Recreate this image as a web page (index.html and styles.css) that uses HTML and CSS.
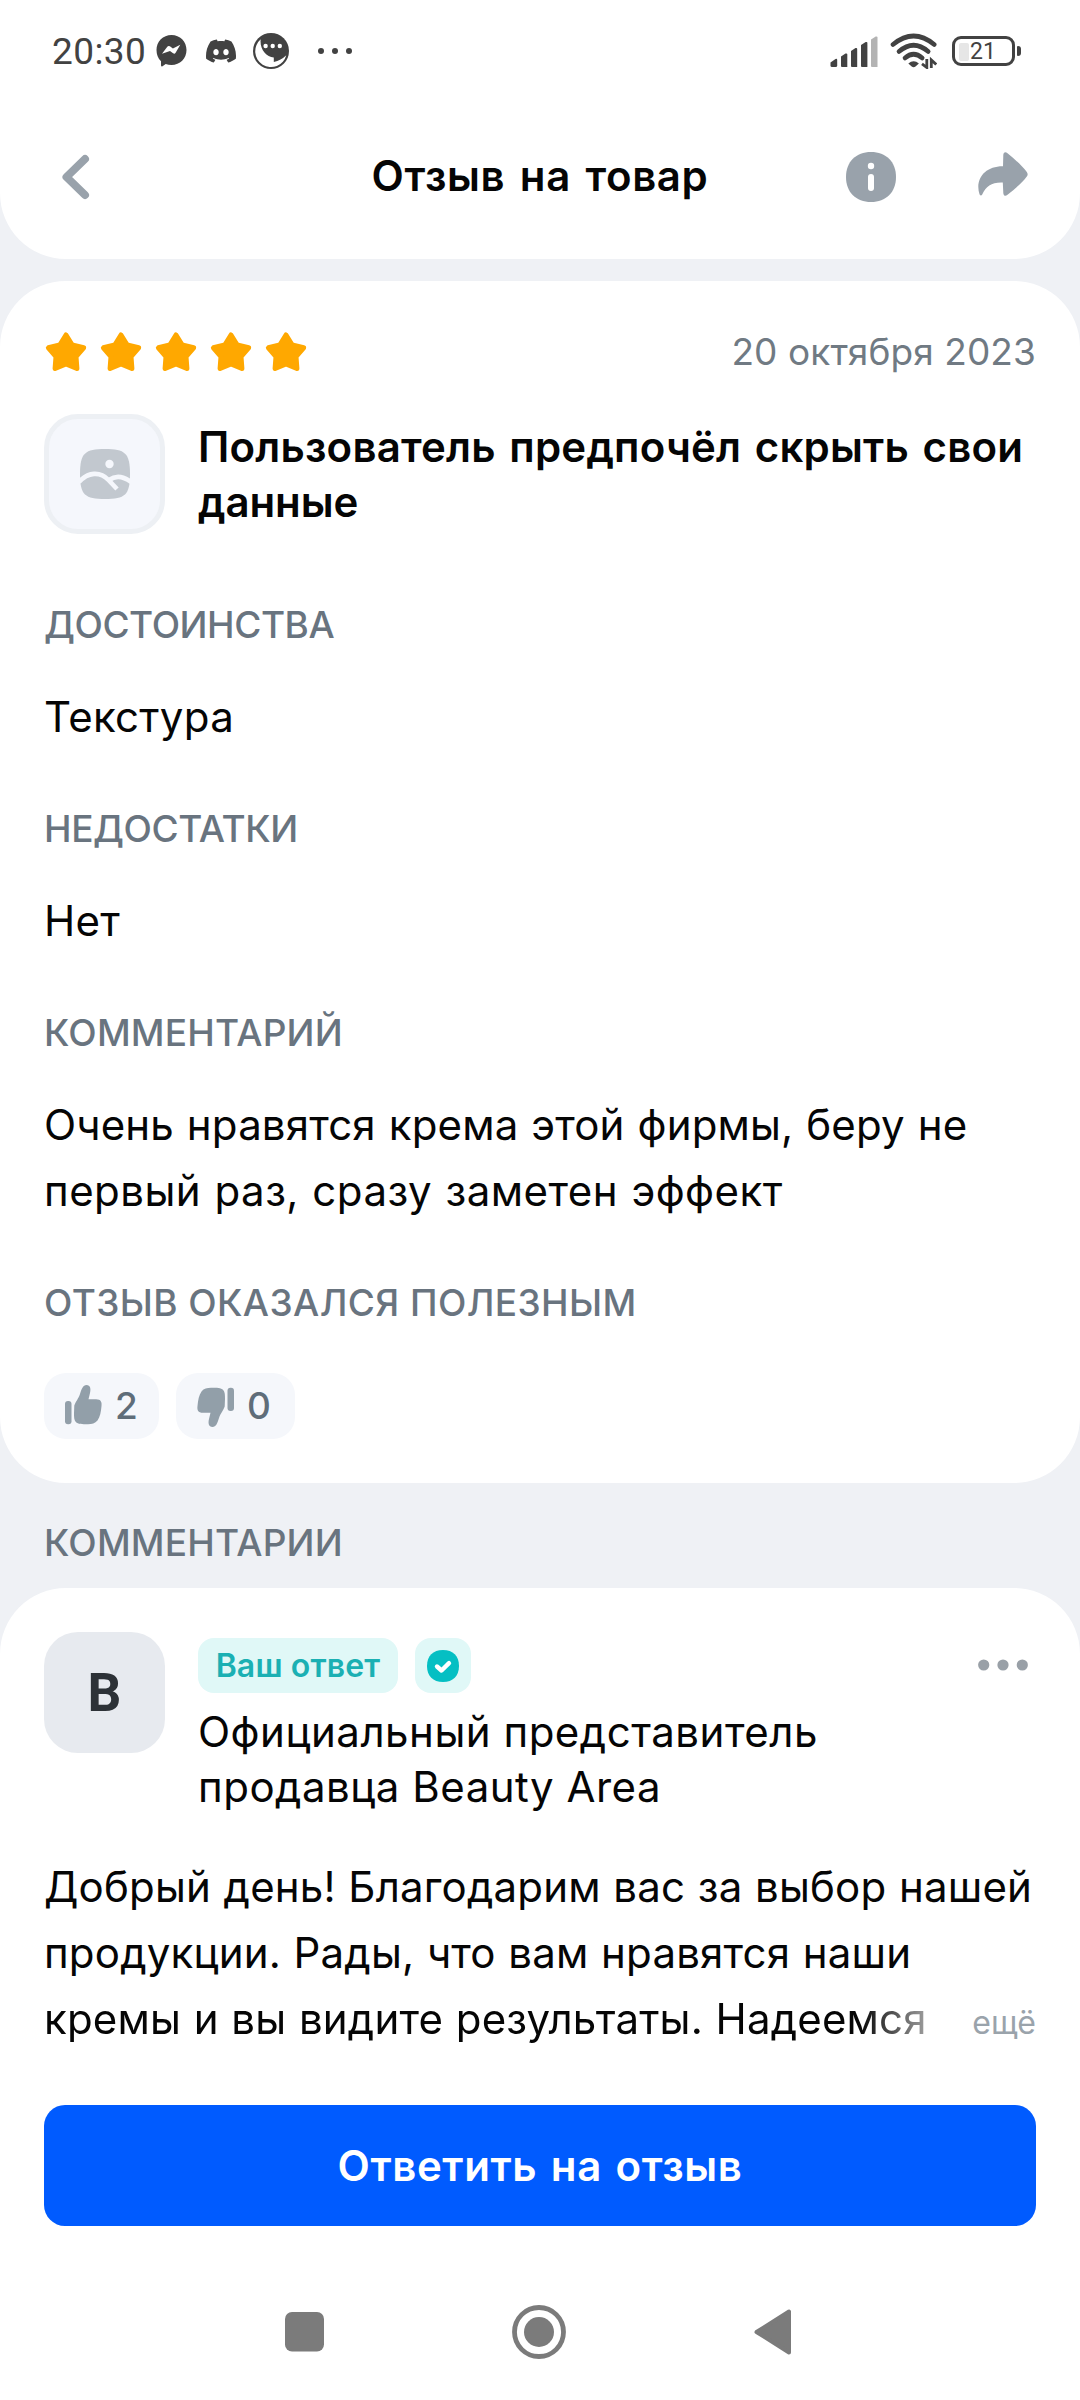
FILE: index.html
```
<!DOCTYPE html>
<html lang="ru">
<head>
<meta charset="utf-8">
<title>Отзыв на товар</title>
<link rel="stylesheet" href="styles.css">
</head>
<body>
<header class="top">
  <div class="status">
    <span class="time">20:30</span>
    <svg class="st-messenger" width="31" height="32" viewBox="0 0 31 32"><path fill="#424242" d="M15.5 0C24 0 30.5 6.500 30.500 15S24 30 15.500 30C13.500 30 11.500 29.700 9.700 29L6.500 31.200Q5 32 5 30.300V26.200C2 23.500 .5 19.500 .5 15 .5 6.500 7 0 15.500 0Z"/><path fill="#fff" d="M6 18.700 11.300 11.700Q12.400 10.300 13.900 11.300L16.900 13.600 24.300 9.700 19.600 17.800Q18.600 19.300 17.100 18.200L14 15.900Z"/></svg>
    <svg class="st-discord" width="30" height="30" viewBox="0 0 24 24"><path fill="#424242" d="M20.317 4.37a19.79 19.79 0 0 0-4.885-1.515.074.074 0 0 0-.079.037c-.21.375-.444.865-.608 1.25-1.845-.277-3.68-.277-5.487 0-.163-.394-.405-.875-.617-1.25a.077.077 0 0 0-.079-.037 19.736 19.736 0 0 0-4.885 1.515.07.07 0 0 0-.032.028C.533 9.046-.319 13.58.1 18.058a.082.082 0 0 0 .031.056c2.053 1.508 4.041 2.423 5.993 3.03a.078.078 0 0 0 .084-.028c.462-.63.873-1.295 1.226-1.994a.076.076 0 0 0-.042-.106 13.1 13.1 0 0 1-1.872-.892.077.077 0 0 1-.008-.128c.126-.094.252-.192.372-.291a.074.074 0 0 1 .078-.01c3.927 1.793 8.18 1.793 12.061 0a.074.074 0 0 1 .079.009c.12.099.246.198.373.292a.077.077 0 0 1-.007.128 12.3 12.3 0 0 1-1.873.891.077.077 0 0 0-.04.107c.36.698.771 1.363 1.225 1.993a.076.076 0 0 0 .084.029c1.961-.607 3.95-1.522 6.002-3.03a.077.077 0 0 0 .032-.055c.5-5.177-.838-9.674-3.549-13.66a.061.061 0 0 0-.031-.029zM8.02 15.331c-1.183 0-2.157-1.085-2.157-2.419 0-1.333.956-2.419 2.157-2.419 1.21 0 2.176 1.096 2.157 2.42 0 1.333-.956 2.418-2.157 2.418zm7.975 0c-1.183 0-2.157-1.085-2.157-2.419 0-1.333.955-2.419 2.157-2.419 1.21 0 2.176 1.096 2.157 2.42 0 1.333-.946 2.418-2.157 2.418z"/></svg>
    <svg class="st-chat" width="36" height="36" viewBox="0 0 36 36"><circle cx="18" cy="18" r="18" fill="#424242"/><path fill="#fff" d="M7.700 6.300A15.800 15.800 0 1 0 33.300 22.300Q28 27.500 20.800 29V24.600C13 24 6.500 16 7.700 6.300Z"/><g fill="#fff"><circle cx="12.600" cy="13" r="2.200"/><circle cx="19.700" cy="13" r="2.200"/><circle cx="26.800" cy="13" r="2.200"/></g></svg>
    <svg class="st-more" width="36" height="8" viewBox="0 0 36 8"><g fill="#424242"><circle cx="4" cy="4" r="3"/><circle cx="18" cy="4" r="3"/><circle cx="32" cy="4" r="3"/></g></svg>
    <svg class="st-signal" width="48" height="31" viewBox="0 0 48 31"><g fill="#424242"><path d="M.5 26.500 5.500 23Q7.200 22.300 7.200 24V29.500Q7.200 31 5.700 31H2Q.5 31 .5 29.500Z"/><path d="M11 20.500 15.500 17.500Q17.300 17 17.300 18.500V31H12Q11 31 11 30Z"/><path d="M21 15 25.500 12Q27.200 11.500 27.200 13V31H22Q21 31 21 30Z"/><path d="M31 9 35.700 6Q37.400 5.500 37.400 7V31H32Q31 31 31 30Z"/></g><path fill="#b3b3b3" d="M41 3.500 45.700.5Q47.500 0 47.500 1.500V31H42Q41 31 41 30Z"/></svg>
    <svg class="st-wifi" width="47" height="36" viewBox="0 0 47 36"><g fill="none" stroke="#424242" stroke-width="4.600" stroke-linecap="round"><path d="M3 11.500Q23.600-5.500 44.200 11.500"/><path d="M9 18.500Q23.600 6 38.200 18.500"/><path d="M15 25Q23.600 17.500 32.200 25"/></g><path fill="#424242" d="M18.300 30.500Q23.600 26 28.900 30.500L25.500 33.500Q23.600 35 21.700 33.500Z"/><path fill="none" stroke="#424242" stroke-width="2.800" d="M36.800 26V34.500L32 30.800M41.300 35V27L46.200 31.500"/></svg>
    <div class="battery"><i class="charge"></i><span>21</span></div><i class="battery-cap"></i>
  </div>
  <div class="bar">
    <svg class="back" width="28" height="46" viewBox="0 0 28 46"><path fill="none" stroke="#99a2ab" stroke-width="8" stroke-linecap="round" stroke-linejoin="round" d="M23 5 4.500 23 23 41"/></svg>
    <h1 class="title">Отзыв на товар</h1>
    <div class="actions">
      <svg width="50" height="50" viewBox="0 0 50 50"><path fill="#99a2ab" d="M25 0C40 0 50 9.700 50 25S40 50 25 50 0 40.300 0 25 10 0 25 0Z"/><circle cx="25" cy="14" r="3.200" fill="#fff"/><path stroke="#fff" stroke-width="6" stroke-linecap="round" d="M25 25V36"/></svg>
      <svg width="50" height="50" viewBox="0 0 50 50"><path fill="#99a2ab" d="M25 14.200 25.300 3C25.500 0 27.500-.6 29.500 1.300 37 7.500 44 13.500 48.800 20Q50.500 22.300 48.800 24.600C44 31 37 37 29.500 42.800 27.500 44.600 25.500 44 25.300 41L24.800 30.500C14 30 8 34 4.200 42.600Q3 44.600 1.600 42.600C-3.500 27 7 14 25 14.200Z"/></svg>
    </div>
  </div>
</header>

<main>
  <article class="card review">
    <div class="rating">
      <div class="stars">
        <svg class="star" viewBox="0 0 44 44"><path d="M22 5 28.200 15 39.600 17.800 32 26.700 32.900 38.500 22 34 11.100 38.500 12 26.700 4.400 17.800 15.800 15Z"/></svg>
        <svg class="star" viewBox="0 0 44 44"><path d="M22 5 28.200 15 39.600 17.800 32 26.700 32.900 38.500 22 34 11.100 38.500 12 26.700 4.400 17.800 15.800 15Z"/></svg>
        <svg class="star" viewBox="0 0 44 44"><path d="M22 5 28.200 15 39.600 17.800 32 26.700 32.900 38.500 22 34 11.100 38.500 12 26.700 4.400 17.800 15.800 15Z"/></svg>
        <svg class="star" viewBox="0 0 44 44"><path d="M22 5 28.200 15 39.600 17.800 32 26.700 32.900 38.500 22 34 11.100 38.500 12 26.700 4.400 17.800 15.800 15Z"/></svg>
        <svg class="star" viewBox="0 0 44 44"><path d="M22 5 28.200 15 39.600 17.800 32 26.700 32.900 38.500 22 34 11.100 38.500 12 26.700 4.400 17.800 15.800 15Z"/></svg>
      </div>
      <time class="date">20 октября 2023</time>
    </div>
    <div class="user">
      <div class="avatar photo"><svg width="50" height="50" viewBox="0 0 50 50"><path fill="#c2c8cf" d="M25 0C45 0 50 4 50 25S45 50 25 50 0 46 0 25 5 0 25 0Z"/><circle cx="29.500" cy="15" r="4.200" fill="#f5f7fc"/><path fill="none" stroke="#f5f7fc" stroke-width="4.600" d="M-1 33C8 23 20 22 28.500 31L37 40M29 31Q39 24 51 33"/></svg></div>
      <p class="name">Пользователь предпочёл скрыть свои<br><span class="tight">данные</span></p>
    </div>
    <section class="block">
      <h2 class="label l-pros">Достоинства</h2>
      <p class="text">Текстура</p>
    </section>
    <section class="block">
      <h2 class="label l-cons">Недостатки</h2>
      <p class="text">Нет</p>
    </section>
    <section class="block">
      <h2 class="label l-comment">Комментарий</h2>
      <p class="text t-review">Очень нравятся крема этой фирмы, беру не<br><span class="wide">первый раз, сразу заметен эффект</span></p>
    </section>
    <section class="block">
      <h2 class="label l-useful">Отзыв оказался полезным</h2>
      <div class="votes">
        <div class="vote up"><svg width="37" height="40" viewBox="0 0 37 40"><g fill="#929fa9"><rect y="16" width="6.500" height="23.300" rx="3"/><path d="M9.300 20.500C11 16 13 14.500 15 9 16.500 4 18 0 21.500 0 25.500 0 26 4 25 8L23.500 14.200H31C36 14.200 37 17 36.500 21 36 27 35 32 32.500 35.500 30 38.500 27 39.200 23 39.200 17 39.200 13 39.200 10.800 37 9 35 9 32 9 28Z"/></g></svg><span>2</span></div>
        <div class="vote down"><svg width="37" height="40" viewBox="0 0 37 40"><g fill="#929fa9" transform="rotate(180 18.500 20)"><rect y="16" width="6.500" height="23.300" rx="3"/><path d="M9.300 20.500C11 16 13 14.500 15 9 16.500 4 18 0 21.500 0 25.500 0 26 4 25 8L23.500 14.200H31C36 14.200 37 17 36.500 21 36 27 35 32 32.500 35.500 30 38.500 27 39.200 23 39.200 17 39.200 13 39.200 10.800 37 9 35 9 32 9 28Z"/></g></svg><span>0</span></div>
      </div>
    </section>
  </article>

  <h2 class="label l-comment comments-title">Комментарии</h2>

  <article class="card answer">
    <div class="author">
      <div class="avatar letter">B</div>
      <div class="author-info">
        <div class="badges">
          <span class="badge">Ваш ответ</span>
          <span class="badge check"><svg width="32" height="32" viewBox="0 0 32 32"><path fill="#05bfc3" d="M16 0C26 0 32 6 32 16S26 32 16 32 0 26 0 16 6 0 16 0Z"/><path fill="none" stroke="#fff" stroke-width="4.400" stroke-linecap="round" stroke-linejoin="round" d="M10 16.500 14.500 20.500 22 13.200"/></svg></span>
          <svg class="menu" width="50" height="12" viewBox="0 0 50 12"><g fill="#99a0a7"><circle cx="5.700" cy="6" r="5.600"/><circle cx="25" cy="6" r="5.600"/><circle cx="44.300" cy="6" r="5.600"/></g></svg>
        </div>
        <p class="author-name">Официальный представитель<br>продавца Beauty Area</p>
      </div>
    </div>
    <p class="text t-answer">Добрый день! Благодарим вас за выбор нашей<br>продукции. Рады, что вам нравятся наши</p>
    <div class="last-line"><span class="text t-answer fade">кремы и вы видите результаты. Надеемся</span><a class="more">ещё</a></div>
    <button class="reply" type="button">Ответить на отзыв</button>
  </article>
</main>

<nav class="nav">
  <svg width="40" height="40" viewBox="0 0 40 40"><rect width="39" height="39.500" rx="7" fill="#7b7b7b"/></svg>
  <svg width="54" height="54" viewBox="0 0 54 54"><circle cx="27" cy="27" r="24.500" fill="none" stroke="#7b7b7b" stroke-width="4.800"/><circle cx="27" cy="27" r="15" fill="#7b7b7b"/></svg>
  <svg width="38" height="46" viewBox="0 0 38 46"><path fill="#7b7b7b" stroke="#7b7b7b" stroke-width="4" stroke-linejoin="round" d="M35 2.500V43.500L2.500 23Z"/></svg>
</nav>
</body>
</html>
```
FILE: styles.css
```
* { box-sizing: border-box; }

body {
  margin: 0;
  background: #eff1f5;
  font-family: Inter, "Noto Sans", sans-serif;
  color: #050505;
}

h1, h2, p { margin: 0; }
svg { display: block; flex: none; }

/* Header with the system status row */
.top {
  height: 259px;
  background: #fff;
  border-radius: 0 0 66px 66px;
}

.status {
  display: flex;
  align-items: center;
  height: 102px;
  padding: 0 59px 0 52px;
}

.time {
  width: 104px;
  padding-top: 1px;
  font: 400 37px/42px Roboto, sans-serif;
  letter-spacing: .4px;
  color: #424242;
}

.st-discord { margin-left: 19px; }
.st-chat { margin-left: 17px; }
.st-more { margin-left: 28px; }
.st-signal { margin-left: auto; }
.st-wifi { margin-left: 12px; }

.battery {
  display: flex;
  align-items: center;
  gap: 1px;
  width: 63px;
  height: 30px;
  margin-left: 15px;
  padding: 1px 0 0 4px;
  border: 3.500px solid #424242;
  border-radius: 9px;
  font: 400 23px/24px Roboto, sans-serif;
  color: #424242;
}

.charge {
  width: 10px;
  height: 18px;
  background: #e6e6e6;
  border-radius: 2px;
}

.battery-cap {
  width: 4px;
  height: 10px;
  margin-left: 2px;
  background: #424242;
  border-radius: 1px 3px 3px 1px;
}

.bar {
  display: grid;
  grid-template-columns: 1fr auto 1fr;
  align-items: center;
  height: 150px;
  padding: 0 52px;
}

.back { margin-left: 10px; }

.title {
  padding-bottom: 4px;
  font-size: 42px;
  font-weight: 600;
  line-height: 55px;
  letter-spacing: .6px;
  word-spacing: 3.500px;
}

.actions {
  display: flex;
  justify-content: flex-end;
  gap: 82px;
}

/* Cards */
.card {
  background: #fff;
  border-radius: 66px;
  padding: 0 44px;
}

.review {
  height: 1202px;
  margin-top: 22px;
  padding-top: 49px;
}

.rating {
  display: flex;
  justify-content: space-between;
  height: 44px;
}

.stars { display: flex; gap: 11px; }

.star {
  width: 44px;
  height: 44px;
  fill: #ffa800;
  stroke: #ffa800;
  stroke-width: 5;
  stroke-linejoin: round;
}

.date {
  font-size: 37px;
  line-height: 44px;
  color: #707a83;
  letter-spacing: .1px;
}

.user {
  display: flex;
  gap: 33px;
  margin-top: 40px;
}

.avatar {
  display: flex;
  flex: none;
  align-items: center;
  justify-content: center;
  width: 121px;
  height: 120px;
  border-radius: 34px;
}

.photo {
  background: #f5f7fc;
  border: 5px solid #edf0f4;
}

.name {
  padding-top: 5px;
  font-size: 42px;
  font-weight: 600;
  line-height: 55px;
  letter-spacing: .2px;
  word-spacing: 2.800px;
  white-space: nowrap;
}

.tight { letter-spacing: -.1px; }

.block { margin-top: 57px; }
.user + .block { margin-top: 69px; }

.label {
  font-size: 37px;
  font-weight: 550;
  line-height: 44px;
  color: #69747f;
  text-transform: uppercase;
}

.l-pros { letter-spacing: -.45px; }
.l-cons { letter-spacing: -.4px; }
.l-comment { letter-spacing: .2px; }
.l-useful { letter-spacing: .4px; }

.text {
  font-size: 42px;
  line-height: 66px;
  letter-spacing: .3px;
  white-space: nowrap;
}

.block .text { margin-top: 37px; }
.block .t-review { letter-spacing: .15px; word-spacing: 1px; }
.wide { letter-spacing: .45px; word-spacing: 1.200px; }

.votes {
  display: flex;
  gap: 17px;
  margin-top: 48px;
}

.vote {
  display: flex;
  align-items: center;
  gap: 13px;
  width: 115px;
  height: 66px;
  padding-left: 21px;
  background: #f5f7fb;
  border-radius: 22px;
  font-size: 37px;
  font-weight: 550;
  line-height: 44px;
  color: #5f6d79;
}

.vote.up svg { margin-bottom: 3px; }
.vote.down { width: 119px; }
.vote.down svg { margin-top: 2px; }

.comments-title {
  margin: 38px 44px 23px;
}

/* Seller's answer */
.answer {
  height: 812px;
  padding-top: 44px;
  border-radius: 66px 66px 0 0;
}

.author { display: flex; gap: 33px; }

.letter {
  height: 121px;
  background: #e7eaef;
  font: 700 53px/60px Roboto, sans-serif;
  color: #2d3237;
}

.author-info { flex: 1; padding-top: 6px; }

.badges {
  display: flex;
  align-items: center;
  gap: 17px;
  height: 55px;
}

.badge {
  display: flex;
  align-items: center;
  justify-content: center;
  width: 200px;
  height: 55px;
  border-radius: 16px;
  background: #e0f8f7;
  color: #1bb0b3;
  font-size: 32px;
  font-weight: 600;
  letter-spacing: .15px;
}

.check { width: 56px; }
.menu { margin: 0 8px 1px auto; }

.author-name {
  margin-top: 11px;
  font-size: 42px;
  line-height: 55px;
  letter-spacing: .5px;
}

.t-answer { letter-spacing: .18px; word-spacing: .6px; }
.author + .t-answer { margin-top: 40px; }

.last-line {
  display: flex;
  align-items: baseline;
  justify-content: space-between;
  height: 66px;
}

.fade {
  -webkit-mask-image: linear-gradient(90deg, #000 815px, transparent 925px);
  mask-image: linear-gradient(90deg, #000 815px, transparent 925px);
}

.more {
  font-size: 32px;
  color: #9aa3ab;
}

.reply {
  display: block;
  width: 992px;
  height: 121px;
  margin-top: 53px;
  padding: 0;
  border: 0;
  border-radius: 21px;
  background: #005bff;
  color: #fff;
  font: 600 42px/55px Inter, "Noto Sans", sans-serif;
  letter-spacing: .6px;
  word-spacing: 2.500px;
}

/* System navigation */
.nav {
  display: grid;
  grid-template-columns: 227px 242px auto;
  align-items: center;
  height: 136px;
  margin-top: -136px;
  padding-left: 285px;
}
```
